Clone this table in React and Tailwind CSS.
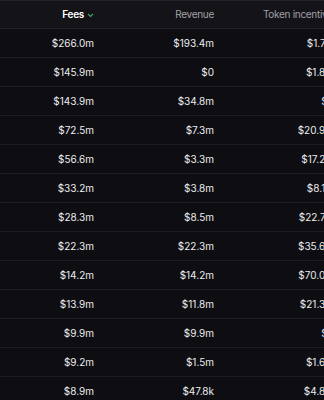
import React from "react";

const rows = [
  ["$266.0m", "$193.4m", "$1.7m"],
  ["$145.9m", "$0", "$1.8m"],
  ["$143.9m", "$34.8m", "$0"],
  ["$72.5m", "$7.3m", "$20.9m"],
  ["$56.6m", "$3.3m", "$17.2m"],
  ["$33.2m", "$3.8m", "$8.1m"],
  ["$28.3m", "$8.5m", "$22.7m"],
  ["$22.3m", "$22.3m", "$35.6m"],
  ["$14.2m", "$14.2m", "$70.0m"],
  ["$13.9m", "$11.8m", "$21.3m"],
  ["$9.9m", "$9.9m", "$0"],
  ["$9.2m", "$1.5m", "$1.6m"],
  ["$8.9m", "$47.8k", "$4.8m"],
];

export default function App() {
  return (
    <div
      className="w-[324px] h-[400px] overflow-hidden bg-[#0e0e12] text-[10px]"
      style={{ fontFamily: "Inter, 'Liberation Sans', sans-serif" }}
    >
      <div className="w-[360px]">
        <div className="flex h-[29px] items-center bg-[#141418] border-t border-b border-[#222228] tracking-[-0.3px]">
          <div className="w-[106px] pr-3 flex justify-end items-center gap-[3px] text-white font-semibold">
            <span>Fees</span>
            <svg width="7" height="5" viewBox="0 0 7 5" className="mt-[2px]">
              <path d="M1 1 L3.5 3.5 L6 1" stroke="#3fa36b" strokeWidth="1.2" fill="none" />
            </svg>
          </div>
          <div className="w-[120px] pr-3 text-right text-[#a0a0a7]">Revenue</div>
          <div className="w-[134px] pl-[37px] text-left text-[#a0a0a7] whitespace-nowrap">Token incentives</div>
        </div>
        {rows.map((r, i) => (
          <div key={i} className="flex h-[29px] items-center border-b border-[#1c1c21] text-[#ececee]">
            <div className="w-[106px] pr-3 text-right">{r[0]}</div>
            <div className="w-[120px] pr-3 text-right">{r[1]}</div>
            <div className="w-[120px] pr-3 text-right">{r[2]}</div>
          </div>
        ))}
      </div>
    </div>
  );
}
